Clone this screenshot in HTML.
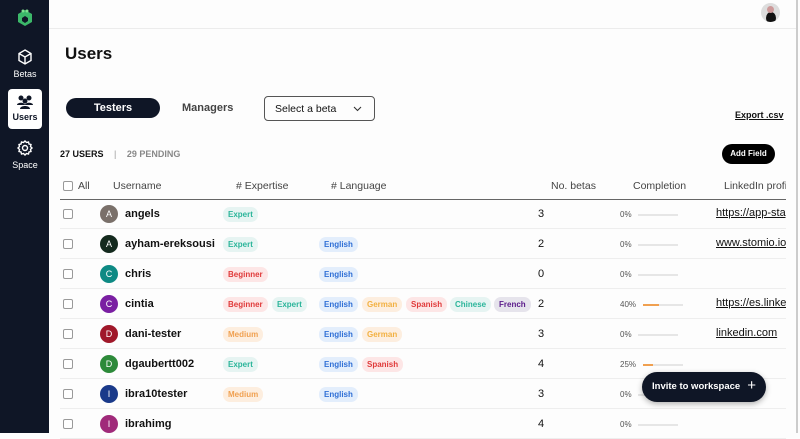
<!DOCTYPE html><html><head><style>
*{margin:0;padding:0;box-sizing:border-box}
body{width:800px;height:433px;overflow:hidden;background:#fdfdfd;font-family:"Liberation Sans",sans-serif;position:relative;color:#111}
.sb{position:absolute;left:0;top:0;width:49px;height:433px;background:#0f1626}
.nav{position:absolute;left:8px;width:34px;text-align:center;color:#fff;font-size:9px}
.nav.act{background:#fff;color:#0f1626;border-radius:4px;font-weight:bold;height:40px}
.a{position:absolute}
.hdr{position:absolute;left:49px;top:28px;right:4px;border-top:1px solid #ececec}
.tag{position:absolute;height:15px;line-height:15px;border-radius:7px;font-size:8px;font-weight:bold;padding:0 5px;top:-7px}
.ex{background:#e6f4f2;color:#2bb59a}.be{background:#fde6e6;color:#e03a3a}.me{background:#fdeedf;color:#f0a050}
.en{background:#e3eefc;color:#2f6fd6}.ge{background:#fdeedf;color:#f2b040}.sp{background:#fde6e6;color:#e03a3a}
.ch{background:#e6f4f2;color:#2bb59a}.fr{background:#e6e4ec;color:#5a1a8a}
.row{position:absolute;left:60px;width:726px;height:30px;border-bottom:1px solid #eee}
.cb{position:absolute;left:3px;top:10px;width:10px;height:10px;border:1px solid #999;border-radius:2px;background:#fff}
.av{position:absolute;left:40px;top:6px;width:18px;height:18px;border-radius:50%;color:#fff;font-size:9px;text-align:center;line-height:18px}
.un{position:absolute;left:65px;top:9px;font-size:11px;font-weight:bold}
.nb{position:absolute;left:478px;top:9px;font-size:11px}
.pc{position:absolute;left:560px;top:11px;font-size:8px;color:#555}
.bar{position:absolute;left:578px;top:15px;width:40px;height:2px;background:#e6e6e6}
.li{position:absolute;left:656px;top:8px;font-size:11px;text-decoration:underline;white-space:nowrap;width:70px;overflow:hidden}
.mid{position:absolute;top:15px}
</style></head><body>
<div class="sb">
<svg class="a" style="left:15px;top:8px" width="20" height="20" viewBox="0 0 20 20"><path d="M10 2l7 4v8l-7 4-7-4V6z" fill="#3cb86a"/><path d="M10 8l3 2v3l-3 2-3-2v-3z" fill="#0f1626"/><circle cx="8" cy="3" r="1.5" fill="#7ee08f"/><circle cx="12" cy="3" r="1.5" fill="#7ee08f"/></svg>
<div class="nav" style="top:48px"><svg width="18" height="18" viewBox="0 0 18 18" fill="none" stroke="#fff" stroke-width="1.4"><path d="M9 2l6 3.5v7L9 16l-6-3.5v-7zM3 5.5L9 9l6-3.5M9 9v7"/></svg><div style="margin-top:1px">Betas</div></div>
<div class="nav act" style="top:89px;padding-top:5px"><svg width="18" height="16" viewBox="0 0 18 16" fill="#0f1626"><circle cx="5" cy="4" r="2.5"/><circle cx="13" cy="4" r="2.5"/><circle cx="9" cy="7" r="2.5"/><path d="M1 11c0-3 8-3 8 0zM9 11c0-3 8-3 8 0zM4 15c0-4 10-4 10 0z"/></svg><div>Users</div></div>
<div class="nav" style="top:139px"><svg width="18" height="18" viewBox="0 0 18 18" fill="none" stroke="#fff" stroke-width="1.4"><circle cx="9" cy="9" r="2.5"/><path d="M9 2l1.5 1.5 2-.5.5 2 2 .5-.5 2L16 9l-1.5 1.5.5 2-2 .5-.5 2-2-.5L9 16l-1.5-1.5-2 .5-.5-2-2-.5.5-2L2 9l1.5-1.5-.5-2 2-.5.5-2 2 .5z"/></svg><div style="margin-top:1px">Space</div></div>
</div>
<div class="hdr"></div>
<div class="a" style="left:761px;top:3px;width:19px;height:19px;border-radius:50%;background:#ddd;overflow:hidden"><div style="position:absolute;left:5px;top:9px;width:10px;height:12px;border-radius:50%;background:#111"></div><div style="position:absolute;left:6px;top:3px;width:7px;height:7px;border-radius:50%;background:#c99"></div></div>
<div class="a" style="right:2px;top:0;width:2px;height:433px;background:#ccc"></div>
<div class="a" style="left:65px;top:44px;font-size:17px;font-weight:bold">Users</div>
<div class="a" style="left:66px;top:98px;width:94px;height:20px;border-radius:10px;background:#0f1626;color:#fff;font-size:11px;font-weight:bold;text-align:center;line-height:20px">Testers</div>
<div class="a" style="left:182px;top:102px;font-size:11px;font-weight:bold;color:#444">Managers</div>
<div class="a" style="left:264px;top:96px;width:111px;height:25px;border:1px solid #555;border-radius:4px;font-size:10.5px;padding:6px 0 0 10px">Select a beta<svg style="position:absolute;right:12px;top:9px" width="9" height="6" viewBox="0 0 9 6"><path d="M1 1l3.5 3.5L8 1" fill="none" stroke="#333" stroke-width="1.1"/></svg></div>
<div class="a" style="left:735px;top:110px;font-size:9px;font-weight:bold;text-decoration:underline">Export .csv</div>
<div class="a" style="left:60px;top:149px;font-size:9px;font-weight:bold">27 USERS <span style="color:#999;margin:0 8px;font-weight:normal">|</span> <span style="color:#888">29 PENDING</span></div>
<div class="a" style="left:722px;top:144px;width:53px;height:20px;border-radius:10px;background:#000;color:#fff;font-size:8px;font-weight:bold;text-align:center;line-height:20px">Add Field</div>
<div class="a" style="left:60px;top:180px;width:726px;height:20px;border-bottom:1.5px solid #666;font-size:10.5px;color:#444">
<div class="cb" style="top:1px"></div><span class="a" style="left:18px;top:0">All</span><span class="a" style="left:53px">Username</span><span class="a" style="left:176px">#&nbsp;Expertise</span><span class="a" style="left:271px">#&nbsp;Language</span><span class="a" style="left:491px">No. betas</span><span class="a" style="left:573px">Completion</span><span class="a" style="left:664px;white-space:nowrap;width:62px;overflow:hidden">LinkedIn profile</span></div>

<div class="row" style="top:199px"><div class="cb"></div><div class="av" style="background:#7a706a">A</div><div class="un">angels</div><div class="mid"><span class="tag ex" style="left:163px">Expert</span></div><div class="nb">3</div><div class="pc">0%</div><div class="bar"></div><div class="li">https://app-stage</div></div>
<div class="row" style="top:229px"><div class="cb"></div><div class="av" style="background:#142a1e">A</div><div class="un">ayham-ereksousi</div><div class="mid"><span class="tag ex" style="left:163px">Expert</span><span class="tag en" style="left:259px">English</span></div><div class="nb">2</div><div class="pc">0%</div><div class="bar"></div><div class="li">www.stomio.io</div></div>
<div class="row" style="top:259px"><div class="cb"></div><div class="av" style="background:#0e8a84">C</div><div class="un">chris</div><div class="mid"><span class="tag be" style="left:163px">Beginner</span><span class="tag en" style="left:259px">English</span></div><div class="nb">0</div><div class="pc">0%</div><div class="bar"></div></div>
<div class="row" style="top:289px"><div class="cb"></div><div class="av" style="background:#7a1fa2">C</div><div class="un">cintia</div><div class="mid"><span class="tag be" style="left:163px">Beginner</span><span class="tag ex" style="left:212px">Expert</span><span class="tag en" style="left:259px">English</span><span class="tag ge" style="left:302px">German</span><span class="tag sp" style="left:346px">Spanish</span><span class="tag ch" style="left:390px">Chinese</span><span class="tag fr" style="left:434px">French</span></div><div class="nb">2</div><div class="pc">40%</div><div class="bar" style="left:583px"><div style="width:16px;height:2px;background:#f0a050"></div></div><div class="li">https://es.linkedin</div></div>
<div class="row" style="top:319px"><div class="cb"></div><div class="av" style="background:#a0182a">D</div><div class="un">dani-tester</div><div class="mid"><span class="tag me" style="left:163px">Medium</span><span class="tag en" style="left:259px">English</span><span class="tag ge" style="left:302px">German</span></div><div class="nb">3</div><div class="pc">0%</div><div class="bar"></div><div class="li">linkedin.com</div></div>
<div class="row" style="top:349px"><div class="cb"></div><div class="av" style="background:#2d8a3a">D</div><div class="un">dgaubertt002</div><div class="mid"><span class="tag ex" style="left:163px">Expert</span><span class="tag en" style="left:259px">English</span><span class="tag sp" style="left:302px">Spanish</span></div><div class="nb">4</div><div class="pc">25%</div><div class="bar" style="left:583px"><div style="width:10px;height:2px;background:#f0a050"></div></div></div>
<div class="row" style="top:379px"><div class="cb"></div><div class="av" style="background:#1a3a8a">I</div><div class="un">ibra10tester</div><div class="mid"><span class="tag me" style="left:163px">Medium</span><span class="tag en" style="left:259px">English</span></div><div class="nb">3</div><div class="pc">0%</div><div class="bar"></div></div>
<div class="row" style="top:409px"><div class="cb"></div><div class="av" style="background:#a02a7a">I</div><div class="un">ibrahimg</div><div class="nb">4</div><div class="pc">0%</div><div class="bar"></div></div>
<div class="a" style="left:642px;top:372px;width:124px;height:30px;border-radius:15px;background:#0f1626;color:#fff;font-size:9.5px;font-weight:bold;line-height:30px;padding-left:10px;box-shadow:0 2px 6px rgba(0,0,0,.3)">Invite to workspace <span style="font-size:15px;font-weight:normal;position:absolute;right:10px;top:-1px">+</span></div>
</body></html>
